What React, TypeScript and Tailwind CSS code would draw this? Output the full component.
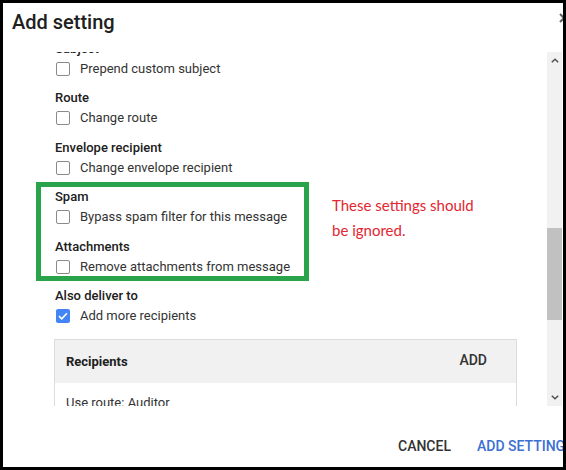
import React from 'react';

const sections = [
  { label: 'Subject', option: 'Prepend custom subject', checked: false },
  { label: 'Route', option: 'Change route', checked: false },
  { label: 'Envelope recipient', option: 'Change envelope recipient', checked: false },
  { label: 'Spam', option: 'Bypass spam filter for this message', checked: false },
  { label: 'Attachments', option: 'Remove attachments from message', checked: false },
  { label: 'Also deliver to', option: 'Add more recipients', checked: true },
];

function Checkbox({ checked }: { checked: boolean }) {
  if (checked) {
    return (
      <span className="flex h-[14px] w-[14px] shrink-0 items-center justify-center rounded-[2px] bg-[#4285f4]">
        <svg width="10" height="8" viewBox="0 0 10 8" fill="none">
          <path d="M1 4.2 3.7 6.8 9 1.3" stroke="#fff" strokeWidth="1.6" />
        </svg>
      </span>
    );
  }
  return <span className="h-[14px] w-[14px] shrink-0 rounded-[2px] border-[1.5px] border-[#8a8a8a] bg-white" />;
}

function Scrollbar() {
  return (
    <div className="mr-px flex w-[15px] shrink-0 flex-col bg-[#f1f1f1]">
      <div className="flex h-[17px] items-center justify-center">
        <svg width="8" height="5" viewBox="0 0 8 5">
          <path d="M0.8 4.3 4 1.2 7.2 4.3" stroke="#505050" strokeWidth="1.5" fill="none" />
        </svg>
      </div>
      <div className="flex-1">
        <div className="mt-[159px] h-[92px] bg-[#c1c1c1]" />
      </div>
      <div className="flex h-[17px] items-center justify-center">
        <svg width="8" height="5" viewBox="0 0 8 5">
          <path d="M0.8 0.7 4 3.8 7.2 0.7" stroke="#505050" strokeWidth="1.5" fill="none" />
        </svg>
      </div>
    </div>
  );
}

export default function App() {
  return (
    <div className="h-[470px] w-[566px] bg-black p-[3px] font-['Roboto',sans-serif]">
      <div className="relative flex h-full w-full flex-col overflow-hidden bg-white">
        {/* Header */}
        <div className="flex h-[49px] shrink-0 items-start whitespace-nowrap pl-[9px] pt-[5px]">
          <h1 className="text-[20px] font-medium leading-[28px] text-[#202020]">Add setting</h1>
          <svg className="ml-[444px] mt-[5px] shrink-0" width="10" height="10" viewBox="0 0 10 10">
            <path d="M1 1 9 9M9 1 1 9" stroke="#606060" strokeWidth="2" />
          </svg>
        </div>

        {/* Scrolling body */}
        <div className="flex h-[354px] shrink-0">
          <div className="flex-1 overflow-hidden pl-[52px] pr-[28px]">
            <div className="mt-[-13px]">
              {sections.map((s) => (
                <div key={s.label} className="mb-[9.4px] last:mb-0">
                  <div className="text-[13px] font-medium leading-5 text-[#202020]">{s.label}</div>
                  <label className="flex h-5 items-center gap-[10px] pl-px">
                    <Checkbox checked={s.checked} />
                    <span className="text-[13px] leading-5 text-[#333]">{s.option}</span>
                  </label>
                </div>
              ))}

              <div className="ml-[-1px] mt-[13px] w-[463px] border border-[#dcdcdc]">
                <div className="flex h-[43px] items-center justify-between bg-[#f1f1f1] pl-[11px] pr-[29px]">
                  <span className="text-[13px] font-bold text-[#202020]">Recipients</span>
                  <span className="mb-[2px] text-[14px] font-medium text-[#333]">ADD</span>
                </div>
                <div className="px-[11px] pt-[10px] pb-3 text-[13px] leading-5 text-[#333]">Use route: Auditor</div>
              </div>
            </div>
          </div>
          <Scrollbar />
        </div>

        {/* Footer */}
        <div className="flex flex-1 items-start gap-[26px] whitespace-nowrap pl-[395px] pt-[30px] text-[14px] font-medium leading-5">
          <span className="text-[#333]">CANCEL</span>
          <span className="text-[#3b6fd4]">ADD SETTING</span>
        </div>

        {/* Annotation */}
        <div className="pointer-events-none absolute left-[33px] top-[179px] h-[99px] w-[273px] border-[5px] border-[#2aa44a]" />
        <div className="pointer-events-none absolute left-[329px] top-[190px] w-[158px] font-['Lato',sans-serif] text-[15px] leading-[25px] text-[#e3262f]">
          These settings should be ignored.
        </div>
      </div>
    </div>
  );
}
